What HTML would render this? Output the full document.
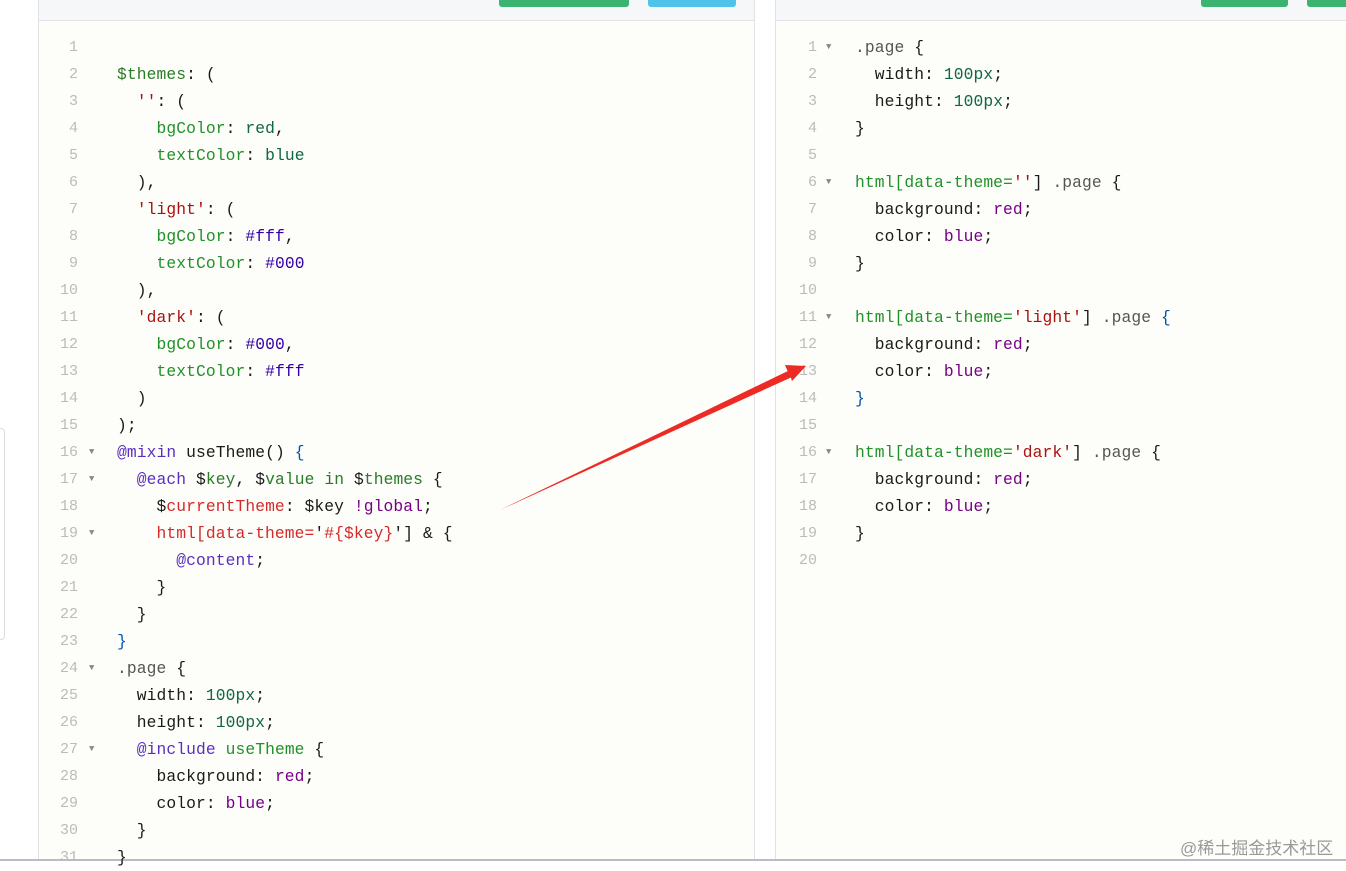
<!DOCTYPE html>
<html><head><meta charset="utf-8"><style>
*{margin:0;padding:0;box-sizing:border-box}
body{width:1346px;height:861px;overflow:hidden;background:#fff;position:relative;font-family:"Liberation Mono",monospace}
.panel{position:absolute;top:0;height:861px;background:#fdfdf9;border-left:1px solid #e2e2e2;border-right:1px solid #e2e2e2}
.hdr{position:absolute;left:0;right:0;top:0;height:21px;background:#f6f7f9;border-bottom:1px solid #e1e3e8}
.btn{position:absolute;top:0;height:7px;border-radius:0 0 3px 3px}
.ln{position:absolute;font-size:16.3px;line-height:27px;white-space:pre;color:#1a1a1a;letter-spacing:0.1px}
.n{position:absolute;font-size:15px;line-height:27px;color:#bbb;text-align:right;width:30px}
.f{position:absolute;font-size:9px;line-height:27px;color:#888}
.v{color:#2a7a2a}.s{color:#a11}.p{color:#219129}.q{color:#116644}.h{color:#3300aa}.a{color:#5a2fc0}.b{color:#05a}.m{color:#708}.t{color:#555}.k{color:#d42a2a}
</style></head><body>
<div style="position:absolute;left:0;top:428px;width:5px;height:212px;border:1px solid #ddd;border-left:none;border-radius:0 4px 4px 0"></div>
<div class="panel" style="left:38px;width:717px">
<div class="hdr"></div>
<div class="btn" style="left:460px;width:130px;background:#3cb371"></div>
<div class="btn" style="left:609px;width:88px;background:#4fc3ea"></div>
</div>
<div class="panel" style="left:775px;width:580px">
<div class="hdr"></div>
<div class="btn" style="left:425px;width:87px;background:#3cb371"></div>
<div class="btn" style="left:531px;width:60px;background:#3cb371"></div>
</div>
<div style="position:absolute;left:0;top:859px;width:1346px;height:2px;background:#b8bcc8"></div>
<div id="L"></div>
<svg style="position:absolute;left:0;top:0" width="1346" height="861"><polygon points="500,510 788,372 785,365 806,366 792,381 790,375" fill="#ee2a24"/><polygon points="500,510 790,370 792,377" fill="#ee2a24"/></svg>
<div style="position:absolute;left:1180px;top:834px;font-family:'Liberation Sans','Noto Sans CJK SC',sans-serif;font-size:17px;color:#999">@稀土掘金技术社区</div>
<script>
var Lc=[
"",
'<span class="v">$themes</span>: (',
'  <span class="s">\'\'</span>: (',
'    <span class="p">bgColor</span>: <span class="q">red</span>,',
'    <span class="p">textColor</span>: <span class="q">blue</span>',
'  ),',
'  <span class="s">\'light\'</span>: (',
'    <span class="p">bgColor</span>: <span class="h">#fff</span>,',
'    <span class="p">textColor</span>: <span class="h">#000</span>',
'  ),',
'  <span class="s">\'dark\'</span>: (',
'    <span class="p">bgColor</span>: <span class="h">#000</span>,',
'    <span class="p">textColor</span>: <span class="h">#fff</span>',
'  )',
');',
'<span class="a">@mixin</span> useTheme() <span class="b">{</span>',
'  <span class="a">@each</span> $<span class="v">key</span>, $<span class="v">value in</span> $<span class="v">themes</span> {',
'    $<span class="k">currentTheme</span>: $key <span class="m">!global</span>;',
'    <span class="k">html[data-theme=</span>\'<span class="k">#{$key}</span>\'] &amp; {',
'      <span class="a">@content</span>;',
'    }',
'  }',
'<span class="b">}</span>',
'<span class="t">.page</span> {',
'  width: <span class="q">100px</span>;',
'  height: <span class="q">100px</span>;',
'  <span class="a">@include</span> <span class="p">useTheme</span> {',
'    background: <span class="m">red</span>;',
'    color: <span class="m">blue</span>;',
'  }',
'}'];
var Lf=[16,17,19,24,27];
var Rc=[
'<span class="t">.page</span> {',
'  width: <span class="q">100px</span>;',
'  height: <span class="q">100px</span>;',
'}','',
'<span class="p">html[data-theme=</span><span class="s">\'\'</span>] <span class="t">.page</span> {',
'  background: <span class="m">red</span>;',
'  color: <span class="m">blue</span>;',
'}','',
'<span class="p">html[data-theme=</span><span class="s">\'light\'</span>] <span class="t">.page</span> <span class="b">{</span>',
'  background: <span class="m">red</span>;',
'  color: <span class="m">blue</span>;',
'<span class="b">}</span>','',
'<span class="p">html[data-theme=</span><span class="s">\'dark\'</span>] <span class="t">.page</span> {',
'  background: <span class="m">red</span>;',
'  color: <span class="m">blue</span>;',
'}',''];
var Rf=[1,6,11,16];
var h='';
Lc.forEach(function(c,i){var y=34+27*i;h+='<div class="n" style="left:48px;top:'+y+'px">'+(i+1)+'</div>';if(Lf.indexOf(i+1)>=0)h+='<div class="f" style="left:89px;top:'+y+'px">▼</div>';h+='<div class="ln" style="left:117px;top:'+y+'px">'+c+'</div>';});
Rc.forEach(function(c,i){var y=34+27*i;h+='<div class="n" style="left:787px;top:'+y+'px">'+(i+1)+'</div>';if(Rf.indexOf(i+1)>=0)h+='<div class="f" style="left:826px;top:'+y+'px">▼</div>';h+='<div class="ln" style="left:855px;top:'+y+'px">'+c+'</div>';});
document.getElementById('L').innerHTML=h;
</script>
</body></html>
